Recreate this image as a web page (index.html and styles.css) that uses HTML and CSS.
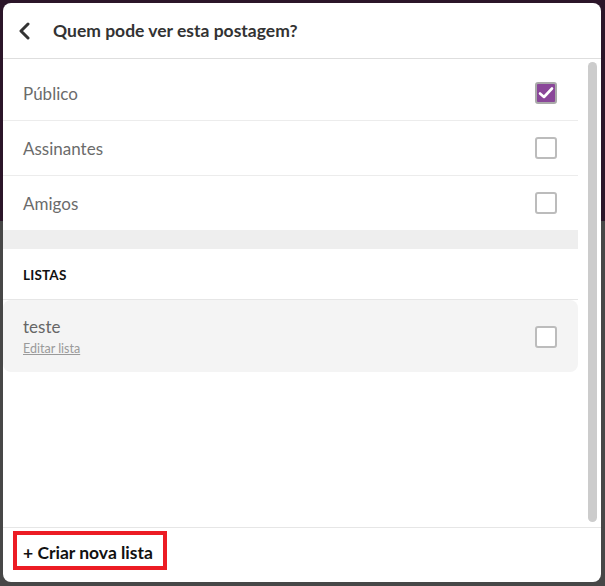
FILE: index.html
```html
<!DOCTYPE html>
<html lang="pt">
<head>
<meta charset="utf-8">
<title>Quem pode ver esta postagem?</title>
<link rel="stylesheet" href="styles.css">
</head>
<body>
<div class="modal">
  <header class="modal-header">
    <button class="back" aria-label="Voltar">
      <svg width="14" height="18" viewBox="0 0 14 18"><path d="M11 2 L4 9 L11 16" fill="none" stroke="#333" stroke-width="3" stroke-linecap="round" stroke-linejoin="round"/></svg>
    </button>
    <h1 class="title">Quem pode ver esta postagem?</h1>
  </header>
  <div class="modal-body">
    <div class="content">
      <ul class="options">
        <li class="option"><span class="label">Público</span><span class="check checked"><svg width="16" height="14" viewBox="0 0 16 14"><path d="M2 7.5 L6 11 L14 2.5" fill="none" stroke="#fff" stroke-width="2.6" stroke-linecap="round" stroke-linejoin="round"/></svg></span></li>
        <li class="option"><span class="label">Assinantes</span><span class="check"></span></li>
        <li class="option last"><span class="label">Amigos</span><span class="check"></span></li>
      </ul>
      <div class="band"></div>
      <div class="section-title">LISTAS</div>
      <div class="list-card">
        <div class="list-info">
          <span class="list-name">teste</span>
          <a class="list-edit" href="#">Editar lista</a>
        </div>
        <span class="check"></span>
      </div>
    </div>
    <div class="scrollbar"><div class="thumb"></div></div>
  </div>
  <footer class="modal-footer">
    <button class="create">+ Criar nova lista</button>
  </footer>
</div>
</body>
</html>
```
FILE: styles.css
```css
* { box-sizing: border-box; }
html, body { margin: 0; padding: 0; }
body {
  width: 605px;
  height: 586px;
  overflow: hidden;
  background: linear-gradient(#2b1529 0, #2b1529 221px, #474747 221px);
  font-family: "Lato", "Noto Sans", sans-serif;
  padding: 3px 4px 4px 3px;
}
.modal {
  width: 598px;
  height: 579px;
  background: #fff;
  border-radius: 8px;
  display: flex;
  flex-direction: column;
  overflow: hidden;
}
.modal-header {
  height: 56px;
  border-bottom: 1px solid #dedede;
  display: flex;
  align-items: center;
  padding-left: 14px;
  flex: none;
}
.back {
  border: 0;
  background: none;
  padding: 0;
  width: 20px;
  height: 20px;
  display: flex;
  align-items: center;
  margin-right: 16px;
}
.title {
  margin: 0;
  font-size: 17.5px;
  font-weight: 700;
  color: #333;
}
.modal-body {
  flex: 1;
  display: flex;
  min-height: 0;
}
.content {
  width: 575px;
  padding-top: 7px;
}
.options {
  list-style: none;
  margin: 0;
  padding: 0;
}
.option {
  height: 55px;
  border-bottom: 1px solid #ececec;
  display: flex;
  align-items: center;
  justify-content: space-between;
  padding: 0 21px 0 20px;
}
.option.last { border-bottom: 0; height: 54px; }
.label {
  font-size: 17px;
  color: #6b6b6b;
}
.check {
  width: 22px;
  height: 22px;
  border: 2px solid #bcbcbc;
  border-radius: 3px;
  background: #fff;
  display: flex;
  align-items: center;
  justify-content: center;
  flex: none;
}
.check.checked {
  background: #8a4799;
  border-color: #a9a9a9;
}
.band {
  height: 19px;
  background: #eeeeee;
}
.section-title {
  height: 51px;
  border-bottom: 1px solid #e6e6e6;
  display: flex;
  align-items: center;
  padding-left: 20px;
  padding-top: 1px;
  font-size: 13.5px;
  font-weight: 700;
  color: #111;
  letter-spacing: 0.2px;
}
.list-card {
  height: 72px;
  background: #f4f4f4;
  border-radius: 8px;
  display: flex;
  align-items: center;
  justify-content: space-between;
  padding: 0 21px 0 20px;
}
.list-info {
  display: flex;
  flex-direction: column;
}
.list-name {
  font-size: 17px;
  color: #666;
  line-height: 22px;
}
.list-edit {
  font-size: 12.5px;
  color: #9a9a9a;
  text-decoration: underline;
  line-height: 16px;
  margin-top: 3px;
}
.list-card .check { margin-top: 2px; }
.scrollbar {
  width: 23px;
  padding: 3px 4px 5px 10px;
}
.thumb {
  width: 9px;
  height: 100%;
  background: #cccccc;
  border-radius: 5px;
}
.modal-footer {
  height: 55px;
  flex: none;
  border-top: 1px solid #e6e6e6;
  padding: 3px 0 0 10px;
}
.create {
  border: 4px solid #ec1c24;
  background: #fff;
  height: 39px;
  width: 154px;
  padding: 4px 0 0 6px;
  text-align: left;
  font-family: "Lato", "Noto Sans", sans-serif;
  font-size: 17.5px;
  font-weight: 700;
  color: #111;
  white-space: nowrap;
}
```
